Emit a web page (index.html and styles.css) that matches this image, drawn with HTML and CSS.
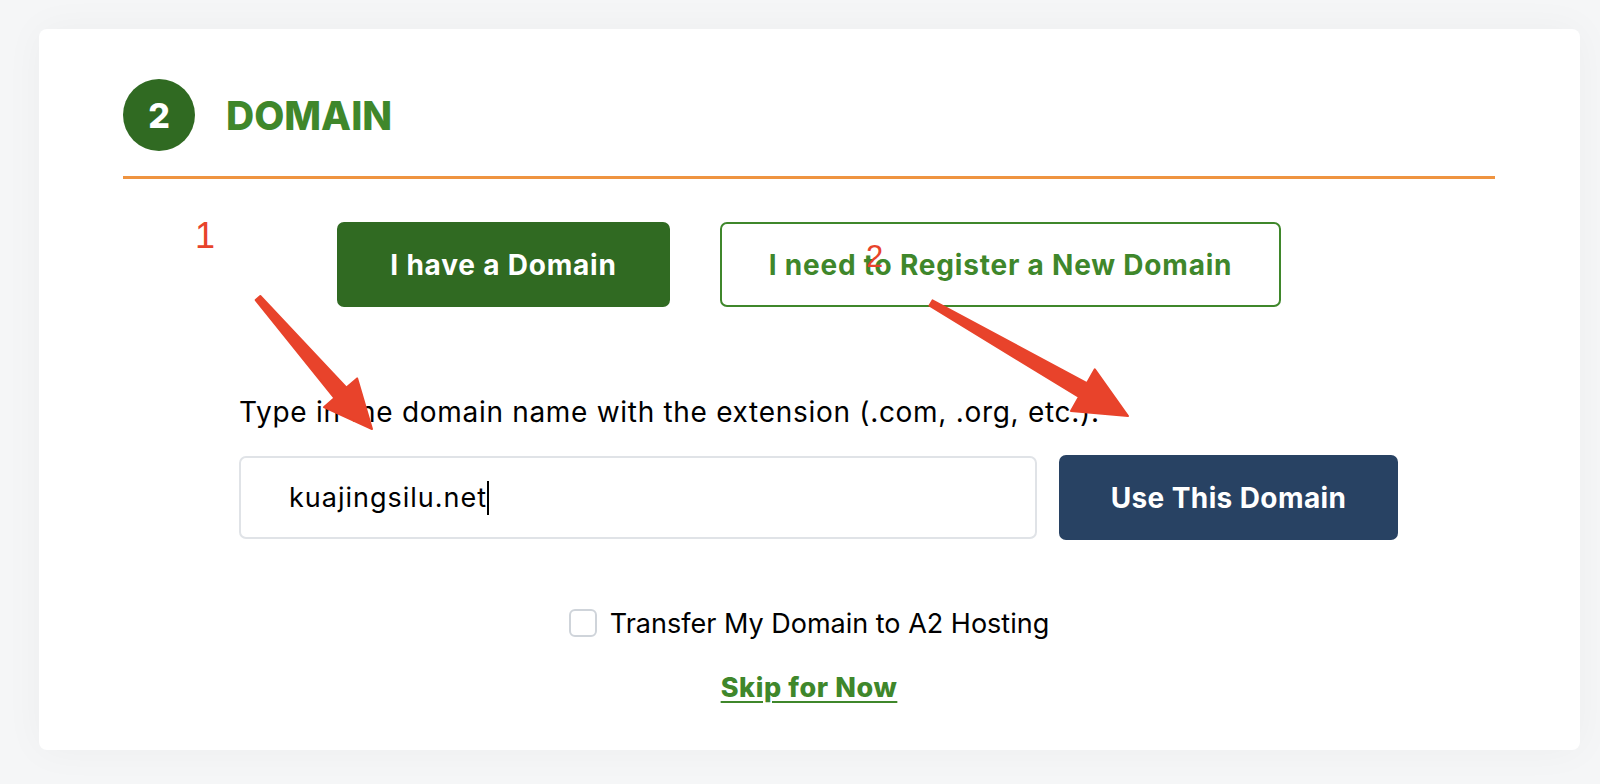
FILE: index.html
```
<!DOCTYPE html>
<html lang="en">
<head>
  <meta charset="UTF-8">
  <meta name="viewport" content="width=device-width, initial-scale=1.0">
  <title>Domain</title>
  <link rel="stylesheet" href="styles.css">
</head>
<body>
  <div class="page">
    <div class="card">
      <div class="step-header">
        <div class="step-num">2</div>
        <h2 class="step-title">DOMAIN</h2>
      </div>

      <div class="choice-row">
        <button class="choice-btn active">I have a Domain</button>
        <button class="choice-btn outline">I need to Register a New Domain</button>
      </div>

      <div class="domain-form">
        <label class="domain-label" for="domain">Type in the domain name with the extension (.com, .org, etc.).</label>
        <div class="input-row">
          <div class="domain-input" id="domain">kuajingsilu.net<span class="caret"></span></div>
          <button class="use-btn">Use This Domain</button>
        </div>
      </div>

      <label class="transfer">
        <span class="check-box"></span>
        Transfer My Domain to A2 Hosting
      </label>

      <div class="skip-row">
        <a class="skip-link" href="#">Skip for Now</a>
      </div>

      <!-- screenshot annotations -->
      <span class="mark mark-1">1</span>
      <span class="mark mark-2">2</span>
      <svg class="arrows" width="1541" height="721" viewBox="39 29 1541 721">
        <polygon points="260.3,296 346.5,387.6 357.1,378.4 372,429 323.9,407.2 334.5,398 255.7,300" />
        <polygon points="932.5,300.4 1086.9,383.2 1094.8,369.3 1128,416 1071,410.9 1078.9,397 929.5,305.6" />
      </svg>
    </div>
  </div>
</body>
</html>
```

FILE: styles.css
```
body {
  margin: 0;
  background: #f5f6f7;
  font-family: 'Inter', 'Open Sans', sans-serif;
  color: #000;
}
.page {
  padding: 29px 20px 34px 39px;
}
.card {
  position: relative;
  box-sizing: border-box;
  width: 1541px;
  height: 721px;
  background: #fff;
  border-radius: 8px;
  padding: 50px 85px 0 84px;
  box-shadow: 0 0 40px rgba(0, 0, 0, 0.04);
}
.step-header {
  display: flex;
  align-items: center;
  gap: 31px;
  padding-bottom: 25px;
  border-bottom: 3px solid #ef9440;
}
.step-num {
  width: 72px;
  height: 72px;
  border-radius: 50%;
  background: #306a22;
  color: #fff;
  font-size: 34px;
  font-weight: 800;
  display: flex;
  align-items: center;
  justify-content: center;
}
.step-title {
  margin: 0;
  font-size: 39px;
  font-weight: 800;
  color: #3f872b;
}
.choice-row {
  display: flex;
  justify-content: center;
  gap: 50px;
  margin-top: 43px;
}
.choice-btn {
  box-sizing: border-box;
  height: 85px;
  border-radius: 7px;
  font-family: inherit;
  font-size: 28px;
  font-weight: 700;
  letter-spacing: 0.8px;
  cursor: pointer;
}
.choice-btn.active {
  width: 333px;
  background: #306a22;
  border: 2px solid #306a22;
  color: #fff;
}
.choice-btn.outline {
  width: 561px;
  background: #fff;
  border: 2px solid #3f872b;
  color: #3f872b;
}
.domain-form {
  margin: 90px 0 0 116px;
  width: 1159px;
}
.domain-label {
  display: block;
  font-size: 28px;
  line-height: 30px;
  letter-spacing: 0.7px;
  margin-bottom: 28px;
}
.input-row {
  display: flex;
  align-items: center;
  gap: 22px;
}
.domain-input {
  box-sizing: border-box;
  width: 798px;
  height: 83px;
  border: 2px solid #e0e3e7;
  border-radius: 7px;
  padding-left: 48px;
  display: flex;
  align-items: center;
  font-size: 27px;
  letter-spacing: 1px;
}
.caret {
  display: inline-block;
  width: 2px;
  height: 34px;
  background: #000;
  margin-left: 0;
}
.use-btn {
  box-sizing: border-box;
  width: 339px;
  height: 85px;
  background: #284263;
  color: #fff;
  border: none;
  border-radius: 7px;
  font-family: inherit;
  font-size: 28px;
  font-weight: 700;
  letter-spacing: 0.4px;
  cursor: pointer;
}
.transfer {
  display: flex;
  justify-content: center;
  align-items: center;
  gap: 13px;
  margin-top: 69px;
  height: 28px;
  font-size: 27px;
}
.check-box {
  box-sizing: border-box;
  width: 28px;
  height: 28px;
  border: 2px solid #cfd4da;
  border-radius: 6px;
}
.skip-row {
  text-align: center;
  margin-top: 36px;
}
.skip-link {
  font-size: 27px;
  line-height: 30px;
  font-weight: 800;
  color: #3f872b;
  text-decoration: underline;
  text-decoration-thickness: 2px;
  text-underline-offset: 4px;
  letter-spacing: 0.6px;
}
.mark {
  position: absolute;
  font-family: 'Liberation Sans', sans-serif;
  color: #e8432b;
  line-height: 1;
}
.mark-1 {
  left: 156px;
  top: 189px;
  font-size: 36px;
}
.mark-2 {
  left: 827px;
  top: 212px;
  font-size: 31px;
}
.arrows {
  position: absolute;
  left: 0;
  top: 0;
  pointer-events: none;
}
.arrows polygon {
  fill: #e8432b;
  stroke: #e8432b;
  stroke-width: 2;
  stroke-linejoin: round;
}
```
